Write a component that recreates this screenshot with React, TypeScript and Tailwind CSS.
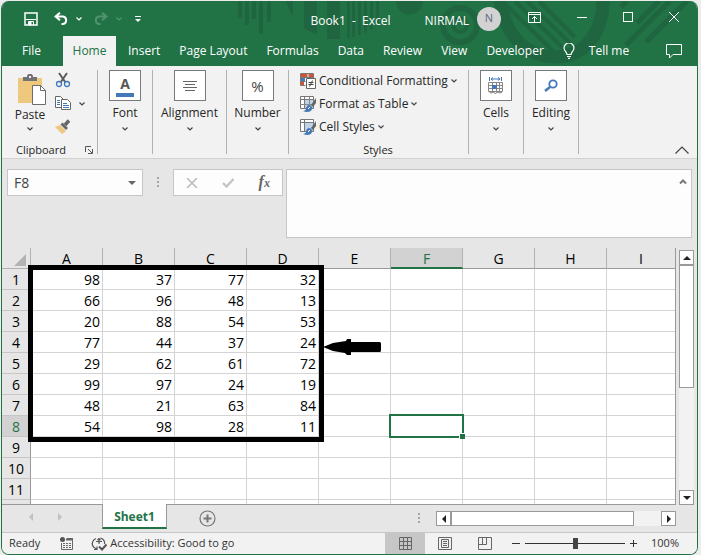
import type { ReactNode } from 'react';
import clsx from 'clsx';

const TABS = ['Insert', 'Page Layout', 'Formulas', 'Data', 'Review', 'View', 'Developer'];
const COLUMNS = ['A', 'B', 'C', 'D', 'E', 'F', 'G', 'H', 'I'];
const DATA = [
  [98, 37, 77, 32],
  [66, 96, 48, 13],
  [20, 88, 54, 53],
  [77, 44, 37, 24],
  [29, 62, 61, 72],
  [99, 97, 24, 19],
  [48, 21, 63, 84],
  [54, 98, 28, 11],
  [],
  [],
  [],
];

const Chevron = ({ className }: { className?: string }) => (
  <svg className={clsx('h-1 w-[6px] flex-none', className)} viewBox="0 0 6 4" fill="none" stroke="currentColor">
    <path d="M.5 .5 3 3 5.500 .5" strokeWidth="1.200" />
  </svg>
);

const HeaderArt = () => (
  <svg className="pointer-events-none absolute right-0 top-0 h-[65px] w-[696px]" viewBox="2 1 696 65" fill="#1f6540">
    <path d="M239 1h4v17h-4zM246 1h4v24h-4zM253 1h4v18h-4zM260 1h4v33h-4zM268 1h4v21h-4z" />
    <path d="M287 1h7v15q-4-6-7-15zM305 1h13v34l-13-7zM328 1h13v38h-13zM348 1h3v37h-3zM353 1h3v36h-3zM359 1h3v34h-3zM365 1h3v32h-3zM371 1h3v28h-3zM377 1h3v23h-3z" />
    <path d="M397 1h27a13 13 0 0 1-27 0z" />
    <g fill="none" stroke="#1f6540">
      <circle cx="461" cy="25" r="17" strokeWidth="6" />
      <circle cx="461" cy="25" r="7" strokeWidth="4" />
      <path d="M501 1c6 36 26 56 56 56 29 0 47-26 47-56" strokeWidth="13" />
      <path d="m508 6 50 49M516 1l50 49M528 1l45 44M540 1l36 36" strokeWidth="4" />
      <path d="m627 45 44-44M647 42l41-41M638 23l22-22M622 7l6-6" strokeWidth="5" />
    </g>
  </svg>
);

const RibbonGroup = ({ label, width, children }: { label: string; width: string; children: ReactNode }) => (
  <button className={clsx('flex flex-none flex-col items-center border-r border-[#b1b1b1]', width)}>
    <span className="flex h-[31px] w-8 items-center justify-center border border-[#7a7a7a] bg-white">{children}</span>
    <span className="mt-1 leading-4">{label}</span>
    <Chevron className="mt-1.5 text-[#444]" />
  </button>
);

const PasteIcon = () => (
  <svg className="ml-1 h-8 w-7" viewBox="0 0 28 32" fill="none">
    <path d="M0 4h24v25H0z" fill="#edc87e" />
    <path d="M5 7V3h4V1.500L10.500 0h3L15 1.500V3h4v4z" fill="#737373" />
    <path d="M11 2h2v2h-2z" fill="#f2f2f2" />
    <path d="M14.500 11.500h8l5 5v14h-13z" fill="#fff" stroke="#6b6b6b" />
    <path d="M22.500 11.500v5h5" stroke="#6b6b6b" />
  </svg>
);

const CutIcon = () => (
  <svg className="h-4 w-4" viewBox="0 0 16 16" fill="none">
    <path d="m4 1 6.500 9.500M12 1l-6.500 9.500" stroke="#5c5c5c" strokeWidth="2" />
    <circle cx="4" cy="12" r="2.500" stroke="#4379b8" strokeWidth="1.300" />
    <circle cx="12" cy="12" r="2.500" stroke="#4379b8" strokeWidth="1.300" />
  </svg>
);

const CopyIcon = () => (
  <svg className="h-[15px] w-4" viewBox="0 0 16 15" fill="#fff">
    <path d="M.5.500h5l3 3v8h-8z" stroke="#666" />
    <path d="M2 4.500h3M2 6.500h3M2 8.500h3" stroke="#4379b8" />
    <path d="M6.500 3.500h6l3 3v7h-9z" stroke="#666" />
    <path d="M8 7.500h4M8 9.500h6M8 11.500h6" stroke="#4379b8" />
  </svg>
);

const PainterIcon = () => (
  <svg className="h-4 w-4" viewBox="0 0 16 16">
    <path d="m0 8 5-2 6 6-4 3z" fill="#edc87e" />
    <path d="m5.500 5.500 2-2 5.500 5.500-2 2z" fill="#666" />
    <path d="m10 6 4-4.500" stroke="#666" strokeWidth="3.500" />
  </svg>
);

const ConditionalIcon = () => (
  <svg className="h-4 w-4" viewBox="0 0 16 16" fill="none">
    <path d="M0 0h14v13H0z" fill="#fff" />
    <path d="M1 1h6v3H1zM1 9h3v3H1z" fill="#d6532f" />
    <path d="M1 5h4v3H1z" fill="#4379b8" />
    <path d="M9 1h4v3H9z" fill="#d6532f" />
    <path d="M.5.500h13v5M.5.500v12h5M.5 4.500h13M.5 8.500h5M8 .5v4" stroke="#777" />
    <path d="M6.500 5.500h9v10h-9z" fill="#fff" stroke="#666" />
    <path d="M8.500 9.500h5M8.500 11.500h5M12.500 7.500l-3 6" stroke="#444" />
  </svg>
);

const TableStyleIcon = ({ grid }: { grid?: boolean }) => (
  <svg className="h-4 w-4" viewBox="0 0 16 16" fill="none">
    <path d="M.5.500h13v12H.5z" fill="#fff" stroke="#777" />
    <path d="M5 4h8v8H5z" fill="#bfd2e8" />
    <path d="M.5 3.500h13M4.500.500v12" stroke="#777" />
    {grid && <path d="M9.500.500v12M.5 8.500h13" stroke="#888" />}
    <path d="m16 2-5 7 2 2 3-4z" fill="#666" />
    <path d="M10 9c-3 0-4 2-4 4 0 1-2 2-3 2 4 2 10 1 9-4z" fill="#4379b8" />
    <path d="m8 13 2-2" stroke="#fff" />
  </svg>
);

const CellsIcon = () => (
  <svg className="h-[17px] w-4" viewBox="0 0 16 17" fill="none">
    <path d="M1.500 0v4M13.500 0v4M3 2h9M5 .5 3 2l2 1.500M10 .5 12 2l-2 1.500" stroke="#4379b8" />
    <path d="M.5 5.500h14v9H.5zM.5 8.500h14M.5 11.500h14M4.500 5.500v9M8.500 5.500v9M11.500 5.500v9" stroke="#888" />
    <path d="M4 8h5v4H4z" fill="#4379b8" />
    <path d="M1 14.500q2 3 4 .500 2 3 5 0 2 2 4 0" stroke="#777" />
  </svg>
);

const Ribbon = () => (
  <section className="flex h-[92px] items-stretch bg-[#f2f2f2] pt-1 text-[#262626]">
    <div className="flex h-[84px] w-24 flex-none flex-col border-r border-[#b1b1b1]">
      <div className="flex h-[72px] flex-none">
        <button className="flex w-14 flex-col items-center pt-1">
          <PasteIcon />
          <span className="mt-px leading-4">Paste</span>
          <Chevron className="mt-1 text-[#444]" />
        </button>
        <div className="-ml-[3px] flex flex-col gap-2 pt-0.5">
          <button aria-label="Cut"><CutIcon /></button>
          <button aria-label="Copy" className="flex items-center gap-2"><CopyIcon /><Chevron className="text-[#444]" /></button>
          <button aria-label="Format Painter"><PainterIcon /></button>
        </div>
      </div>
      <div className="flex flex-none items-center justify-between pl-3.5 pr-1 text-[11px] leading-4">
        Clipboard
        <button aria-label="Clipboard settings">
          <svg className="h-2 w-2" viewBox="0 0 8 8" fill="none" stroke="#555">
            <path d="M.5 6V.500H6M3 3l4 4M7.500 3v4.500H3" />
          </svg>
        </button>
      </div>
    </div>
    <div className="flex h-[84px]">
      <RibbonGroup label="Font" width="w-[55px]">
        <span className="border-b-4 border-[#4379b8] px-1 text-sm font-bold leading-[18px] text-[#555]">A</span>
      </RibbonGroup>
      <RibbonGroup label="Alignment" width="w-[74px]">
        <svg className="h-3 w-4" viewBox="0 0 16 12" stroke="#666"><path d="M1 1.500h14M3 4.500h10M1 7.500h14M3 10.500h10" /></svg>
      </RibbonGroup>
      <RibbonGroup label="Number" width="w-[62px]">
        <span className="text-[15px] text-[#444]">%</span>
      </RibbonGroup>
      <div className="flex w-[180px] flex-none flex-col border-r border-[#b1b1b1] pl-[11px]">
        <button className="flex h-[22px] flex-none items-center gap-[3px]"><ConditionalIcon />Conditional Formatting<Chevron className="text-[#444]" /></button>
        <button className="flex h-6 flex-none items-center gap-[3px]"><TableStyleIcon grid />Format as Table<Chevron className="text-[#444]" /></button>
        <button className="flex h-[22px] flex-none items-center gap-[3px]"><TableStyleIcon />Cell Styles<Chevron className="text-[#444]" /></button>
        <span className="mt-1 flex-none pr-3 text-center text-[11px] leading-4">Styles</span>
      </div>
      <RibbonGroup label="Cells" width="w-[55px]"><CellsIcon /></RibbonGroup>
      <RibbonGroup label="Editing" width="w-[55px]">
        <svg className="h-3.5 w-3.5" viewBox="0 0 14 14" fill="none" stroke="#4379b8">
          <circle cx="9" cy="5" r="3.700" strokeWidth="1.800" /><path d="M6 8 1 12" strokeWidth="2.500" />
        </svg>
      </RibbonGroup>
    </div>
    <button aria-label="Collapse the ribbon" className="ml-auto mr-2 self-end pb-1">
      <svg className="h-2 w-3.5" viewBox="0 0 14 8" fill="none" stroke="#444" strokeWidth="1.200"><path d="m.5 7.500 6.500-6.500 6.500 6.500" /></svg>
    </button>
  </section>
);

const FormulaBar = () => (
  <section className="flex h-[90px] items-start border-t border-[#d2d2d2] px-[5px] pt-2.5 text-[#444]">
    <div className="flex h-[27px] w-[136px] items-center border border-[#c6c6c6] bg-[#fdfdfd]">
      <input aria-label="Name box" defaultValue="F8" className="w-full min-w-0 flex-1 px-1.5 text-sm outline-none" />
      <button aria-label="Open name list" className="px-1.5">
        <svg className="h-1 w-2" viewBox="0 0 8 4" fill="#666"><path d="M0 0h8L4 4z" /></svg>
      </button>
    </div>
    <svg className="mx-[14px] mt-2 h-2.5 w-0.5" viewBox="0 0 2 10" fill="#a6a6a6"><path d="M0 0h2v2H0zM0 4h2v2H0zM0 8h2v2H0z" /></svg>
    <div className="flex h-[27px] w-[110px] items-center justify-around border border-[#c6c6c6] bg-[#fdfdfd]">
      <button aria-label="Cancel"><svg className="h-2.5 w-3" viewBox="0 0 12 10" stroke="#bdbdbd" strokeWidth="1.600"><path d="m1 0 10 10M11 0 1 10" /></svg></button>
      <button aria-label="Enter"><svg className="h-2.5 w-3" viewBox="0 0 12 10" fill="none" stroke="#c4c4c4" strokeWidth="2.400"><path d="m1 5 3.500 3.500L11.500 1" /></svg></button>
      <button aria-label="Insert function" className="font-['Liberation_Serif',serif] text-base font-bold italic leading-4 text-[#666]">f<span className="text-xs">x</span></button>
    </div>
    <div className="ml-[3px] flex h-[69px] flex-1 items-start border border-[#c6c6c6] bg-[#fdfdfd]">
      <textarea aria-label="Formula bar" className="h-full min-w-0 flex-1 resize-none outline-none" />
      <button aria-label="Collapse formula bar" className="px-1 pt-2">
        <svg className="h-[7px] w-2" viewBox="0 0 8 7" fill="none" stroke="#777" strokeWidth="2"><path d="m1 5.500 3-3 3 3" /></svg>
      </button>
    </div>
  </section>
);

const Sheet = () => (
  <div className="relative min-w-0 flex-1 overflow-hidden border-b border-r border-[#999] bg-white">
    <table className="w-full table-fixed border-separate border-spacing-0 text-sm leading-[18px] text-black">
      <thead>
        <tr className="h-[21px] bg-[#e6e6e6] leading-[17px]">
          <th className="w-[29px] border-b border-r border-[#b1b1b1] p-0" aria-label="Select all">
            <svg className="ml-auto mr-1 mt-1 h-3 w-3" viewBox="0 0 12 12" fill="#b3b3b3"><path d="M12 0v12H0z" /></svg>
          </th>
          {COLUMNS.map((col) => (
            <th
              key={col}
              className={clsx(
                'h-[21px] border-b p-0 pt-0.5 align-top font-normal',
                col !== 'I' && 'w-[72px] border-r border-r-[#b1b1b1]',
                col === 'F' ? 'border-b-2 border-b-[#217346] bg-[#d2d2d2] text-[#217346]' : 'border-b-[#999]',
              )}
            >
              {col}
            </th>
          ))}
        </tr>
      </thead>
      <tbody>
        {DATA.map((row, i) => (
          <tr key={i}>
            <th
              className={clsx(
                'h-[21px] border-b border-r border-b-[#c6c6c6] border-r-[#999] p-0 pt-0.5 font-normal',
                i === 7 ? 'bg-[#d2d2d2] text-[#217346]' : 'bg-[#e6e6e6]',
              )}
            >
              {i + 1}
            </th>
            {COLUMNS.map((col, j) => (
              <td
                key={col}
                className={clsx('relative h-[21px] border-b border-[#d4d4d4] p-0 pr-0.5 pt-0.5 text-right', col !== 'I' && 'border-r')}
              >
                {row[j]}
                {col === 'F' && i === 7 && (
                  <span className="absolute -inset-0.5 z-10 border-2 border-[#217346]">
                    <span className="absolute -bottom-[3px] -right-[3px] size-1.5 border-l border-t border-white bg-[#217346]" />
                  </span>
                )}
              </td>
            ))}
          </tr>
        ))}
        <tr className="h-1">
          <th className="h-1 border-r border-[#999] bg-[#e6e6e6] p-0" />
          {COLUMNS.map((col) => (
            <td key={col} className={clsx('h-1 border-[#d4d4d4] p-0', col !== 'I' && 'border-r')} />
          ))}
        </tr>
      </tbody>
    </table>
    {/* highlighted range and its pointer */}
    <div className="absolute left-[26px] top-[17px] h-[177px] w-[296px] border-[5px] border-black" />
    <svg className="absolute left-[321px] top-[91px] h-4 w-[58px]" viewBox="0 0 58 16">
      <path d="M0 8 10 4 23 2l1-2h4v3h28.500q1.500 0 1.500 1.500v7q0 1.500-1.500 1.500H28v3h-4l-2-2-12-2z" />
    </svg>
  </div>
);

const ArrowButton = ({ label, d }: { label: string; d: string }) => (
  <button aria-label={label} className="flex size-[15px] flex-none items-center justify-center border border-[#999] bg-white">
    <svg className="size-2" viewBox="0 0 8 8" fill="#222"><path d={d} /></svg>
  </button>
);

const SheetTabs = () => (
  <nav className="flex h-[27px] items-start text-xs">
    <div className="flex w-[100px] gap-[25px] pl-[27px] pt-2">
      <button aria-label="Previous sheet"><svg className="h-2 w-1" viewBox="0 0 4 8" fill="#c0c0c0"><path d="M4 0v8L0 4z" /></svg></button>
      <button aria-label="Next sheet"><svg className="h-2 w-1" viewBox="0 0 4 8" fill="#c0c0c0"><path d="M0 0v8l4-4z" /></svg></button>
    </div>
    <button className="relative z-10 -mt-px h-[25px] w-[65px] border-x border-b-2 border-x-[#999] border-b-[#217346] bg-white pt-0.5 font-bold text-[#217346]">Sheet1</button>
    <button aria-label="New sheet" className="ml-8 pt-[5px]">
      <svg className="size-[17px]" viewBox="0 0 17 17" fill="none" stroke="#777"><circle cx="8.500" cy="8.500" r="7.500" strokeWidth="1.200" /><path d="M8.500 4.500v8M4.500 8.500h8" strokeWidth="2" /></svg>
    </button>
    <svg className="ml-auto mr-4 mt-2 h-2.5 w-0.5" viewBox="0 0 2 10" fill="#a6a6a6"><path d="M0 0h2v2H0zM0 4h2v2H0zM0 8h2v2H0z" /></svg>
    <div className="mr-[21px] mt-1.5 flex w-60 bg-[#f2f2f2]">
      <ArrowButton label="Scroll left" d="M6 0v8L2 4z" />
      <div className="h-[15px] w-[183px] border border-[#999] bg-white" />
      <span className="flex-1" />
      <ArrowButton label="Scroll right" d="M2 0v8l4-4z" />
    </div>
  </nav>
);

const StatusBar = () => (
  <footer className="flex h-[22px] items-center border-t border-[#c6c6c6] bg-[#f2f2f2] pl-[7px] text-[11px] text-[#333]">
    <span>Ready</span>
    <svg className="ml-5 h-[13px] w-[13px] flex-none" viewBox="0 0 13 13" fill="none" stroke="#666">
      <path d="M7 1.500h6M1.500 6v6.500h11v-11" /><path d="M6 2.500h7" strokeWidth="2" />
      <path d="M3 6.500h2M6 6.500h2M9 6.500h2M3 8.500h2M6 8.500h2M9 8.500h2M3 10.500h2M6 10.500h2M9 10.500h2" />
      <circle cx="2.500" cy="2.500" r="2.500" fill="#555" stroke="none" />
    </svg>
    <button className="ml-[18px] flex items-center gap-[3px]">
      <svg className="h-3.5 w-4" viewBox="0 0 16 14" fill="none" stroke="#555">
        <path d="M5 1.500C1 3 0 8 3 10.500l3 1.500M3 12.500h3v-3M9.500 1c3.500 1 4.500 4 4 6M8 2v5M5 4.500h6M6.500 3 8 1.500 9.500 3" strokeWidth="1.200" />
        <path d="m8 9.500 3 3 4.500-5" strokeWidth="2" />
      </svg>
      Accessibility: Good to go
    </button>
    <div className="ml-auto flex h-full items-center">
      <button aria-label="Normal view" className="flex h-full w-10 items-center justify-center bg-[#c6c6c6]">
        <svg className="size-[13px]" viewBox="0 0 13 13" fill="none" stroke="#666"><path d="M.5.500h12v12H.5zM4.500.500v12M8.500.500v12M.5 4.500h12M.5 8.500h12" /></svg>
      </button>
      <button aria-label="Page layout view" className="flex w-10 justify-center">
        <svg className="h-[13px] w-3.5" viewBox="0 0 14 13" fill="none" stroke="#666"><path d="M.5.500h13v12H.5zM3.500 2.500h7v8h-7zM5 4.500h4M5 6.500h4M5 8.500h4" /></svg>
      </button>
      <button aria-label="Page break view" className="flex w-10 justify-center">
        <svg className="h-[13px] w-3.5" viewBox="0 0 14 13" fill="none" stroke="#666"><path d="M.5.500h13v12H.5zM4.500.500v7M8.500.500v7M.5 7.500h8" /></svg>
      </button>
      <button aria-label="Zoom out" className="ml-[7px] h-px w-2 bg-[#333]" />
      <input
        type="range"
        aria-label="Zoom"
        defaultValue={50}
        className="mx-[5px] h-[11px] w-[100px] appearance-none bg-[linear-gradient(#333,#333)] bg-[length:100%_1px] bg-center bg-no-repeat [&::-webkit-slider-thumb]:h-[11px] [&::-webkit-slider-thumb]:w-[5px] [&::-webkit-slider-thumb]:appearance-none [&::-webkit-slider-thumb]:bg-[#444]"
      />
      <button aria-label="Zoom in"><svg className="size-[7px]" viewBox="0 0 7 7" stroke="#333"><path d="M0 3.500h7M3.500 0v7" /></svg></button>
      <span className="ml-3.5 mr-[18px]">100%</span>
    </div>
  </footer>
);

const TitleBar = () => (
  <div className="relative flex h-[35px] items-center">
    <div className="flex items-center pl-[22px]">
      <button aria-label="Save">
        <svg className="size-3.5" viewBox="0 0 14 14" fill="none" stroke="#fff"><path d="M1 1h12v12H1z" strokeWidth="1.500" /><path d="M2 7.500h10M4.500 13V9.500h5V13" /><path d="M5 10h2v3H5z" fill="#fff" /></svg>
      </button>
      <button aria-label="Undo" className="ml-4 flex items-center gap-2">
        <svg className="h-[13px] w-3.5" viewBox="0 0 14 13" fill="none" stroke="#fff" strokeWidth="2"><path d="M6 .7 1.500 4.500 6 8.300M1.500 4.500H9a3.800 3.800 0 0 1 0 7.500H7.500" /></svg>
        <Chevron />
      </button>
      <button aria-label="Redo" disabled className="ml-3 flex items-center gap-2 text-[#4f9370]">
        <svg className="h-[13px] w-3.5" viewBox="0 0 14 13" fill="none" stroke="currentColor" strokeWidth="2"><path d="M8 .7 12.500 4.500 8 8.300M12.500 4.500H5A3.800 3.800 0 0 0 5 12h1.500" /></svg>
        <Chevron />
      </button>
      <button aria-label="Customize toolbar" className="ml-[13px]">
        <svg className="h-1.5 w-[6px]" viewBox="0 0 6 6" fill="#fff"><path d="M0 0h6v1H0zM0 3h6L3 6z" /></svg>
      </button>
    </div>
    <h1 className="ml-auto whitespace-pre pt-1">Book1  -  Excel</h1>
    <span className="ml-[34px] pt-1">NIRMAL</span>
    <span className="ml-2 flex size-6 items-center justify-center rounded-full bg-[#d2d2d2] text-[11px] text-[#5b6b85]">N</span>
    <div className="ml-[27px] mr-[18px] flex items-center gap-9 pb-[3px]">
      <button aria-label="Ribbon display options">
        <svg className="h-[11px] w-[13px]" viewBox="0 0 13 11" fill="none" stroke="#fff"><path d="M.5.500h12v10H.5zM.5 2.500h12M6.500 10V4.500M4 7l2.500-2.500L9 7" /></svg>
      </button>
      <button aria-label="Minimize" className="h-px w-2.5 bg-white" />
      <button aria-label="Maximize" className="size-2.5 border border-white" />
      <button aria-label="Close"><svg className="size-2.5" viewBox="0 0 10 10" stroke="#fff"><path d="m0 0 10 10M10 0 0 10" /></svg></button>
    </div>
  </div>
);

const App = () => (
  <div className="bg-[#ececec] pt-px font-['Open_Sans','Noto_Sans',sans-serif] text-xs">
    <main className="ml-px mr-[3px] overflow-hidden rounded-lg border border-t-0 border-[#217346] bg-[#e6e6e6]">
      <header className="relative bg-[#217346] text-white">
        <HeaderArt />
        <TitleBar />
        <nav className="relative flex h-[30px] items-center gap-[19px] pl-5">
          <button>File</button>
          <button className="-mr-[7px] ml-[3px] h-full w-[53px] bg-[#f2f2f2] text-[#217346]">Home</button>
          {TABS.map((tab) => (
            <button key={tab} className="whitespace-nowrap">{tab}</button>
          ))}
          <button className="flex items-center gap-3.5 whitespace-nowrap">
            <svg className="h-4 w-3" viewBox="0 0 12 16" fill="none" stroke="#fff" strokeWidth="1.200"><path d="M4 11.500C4 9 1 8 1 5a5 5 0 0 1 10 0c0 3-3 4-3 6.500zM4 13.500h4M5 15.400h2" /></svg>
            Tell me
          </button>
          <button aria-label="Comments" className="ml-auto mr-[15px]">
            <svg className="h-[15px] w-4" viewBox="0 0 16 15" fill="none" stroke="#fff"><path d="M.5.500h15v10H7l-3.500 3.500v-3.500h-3z" /></svg>
          </button>
        </nav>
      </header>
      <Ribbon />
      <FormulaBar />
      <div className="flex">
        <Sheet />
        <div className="flex w-[21px] flex-none flex-col pl-[3px] pt-0.5">
          <div className="flex w-[15px] flex-1 flex-col bg-[#f2f2f2]">
            <ArrowButton label="Scroll up" d="M0 6h8L4 2z" />
            <div className="h-[123px] border border-[#999] bg-white" />
            <span className="flex-1" />
            <ArrowButton label="Scroll down" d="M0 2h8L4 6z" />
          </div>
        </div>
      </div>
      <SheetTabs />
      <StatusBar />
    </main>
  </div>
);

export default App;
